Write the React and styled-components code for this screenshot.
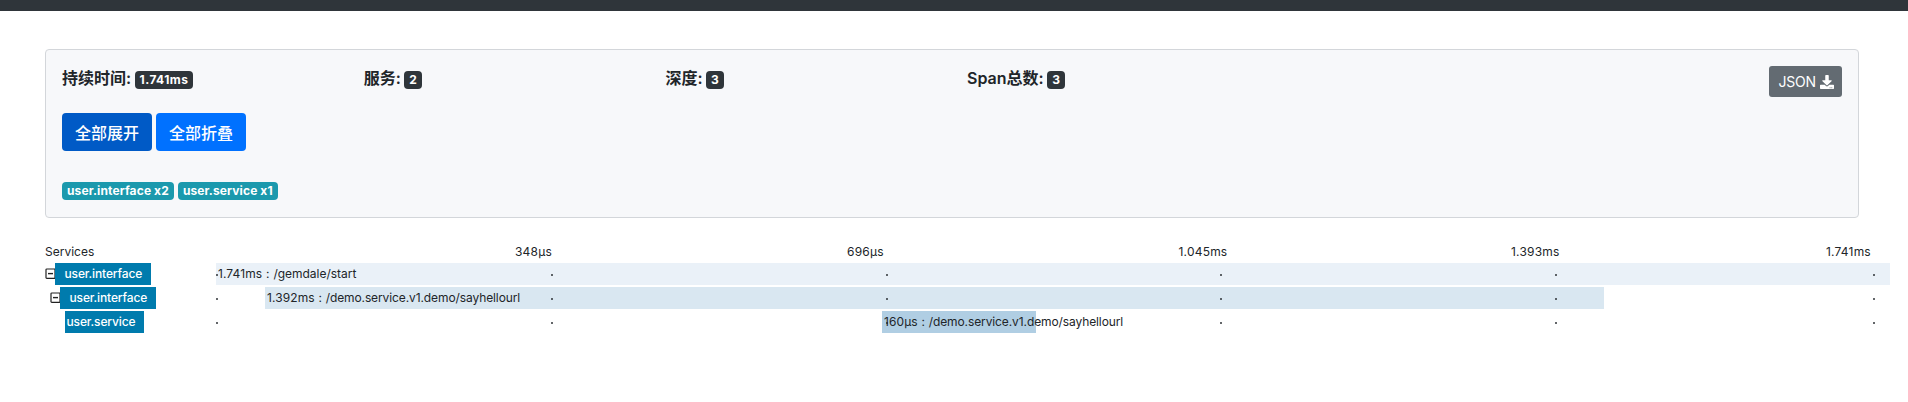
import React from "react";
import styled, { createGlobalStyle } from "styled-components";

const GlobalStyle = createGlobalStyle`
  *, *::before, *::after { box-sizing: border-box; }
  body {
    margin: 0;
    background: #fff;
    color: #212529;
    font-family: Inter, "Noto Sans CJK SC", sans-serif;
    font-size: 16px;
    line-height: 24px;
    overflow: hidden;
  }
`;

const TopBar = styled.header`
  height: 11px;
  background: #2f353a;
`;

const Page = styled.main`
  padding: 38px 0 0 45px;
`;

const Card = styled.section`
  display: flex;
  flex-direction: column;
  align-items: flex-start;
  width: 1814px;
  height: 169px;
  padding: 16px;
  border: 1px solid #d3d6da;
  border-radius: 4px;
  background: #f7f8fa;
`;

const SummaryRow = styled.div`
  display: flex;
  align-items: flex-start;
  width: 100%;
  height: 47px;
`;

const Stat = styled.div`
  display: flex;
  width: 301.7px;
  gap: 3.5px;
  font-size: 16px;
  font-weight: 600;
  white-space: nowrap;
`;

const Badge = styled.span`
  height: 18px;
  padding: 0 5px;
  border-radius: 4px;
  background: ${({ $tone }) => ($tone === "info" ? "#1b99ad" : "#2f353a")};
  color: #fff;
  font-size: 12px;
  font-weight: 700;
  letter-spacing: 0.12px;
  line-height: 18px;
  white-space: nowrap;
`;

const StatBadge = styled(Badge)`
  margin-top: 5px;
  letter-spacing: 0.45px;
`;

const JsonButton = styled.button`
  display: flex;
  align-items: center;
  gap: 4px;
  width: 73px;
  height: 31px;
  margin-left: auto;
  padding: 0 0 0 9.5px;
  border: 0;
  border-radius: 3px;
  background: #636b72;
  color: #fff;
  font: 14px/21px Inter, sans-serif;
  letter-spacing: -0.25px;
`;

const Actions = styled.div`
  display: flex;
  gap: 4px;
`;

const Button = styled.button`
  width: 90px;
  height: 38px;
  padding: 0;
  border: 0;
  border-radius: 4px;
  background: ${({ $active }) => ($active ? "#005ac6" : "#0071ff")};
  color: #fff;
  font: 500 16px/24px "Noto Sans CJK SC", sans-serif;
`;

const Tags = styled.div`
  display: flex;
  gap: 4px;
  margin-top: 31px;
`;

const Timeline = styled.section`
  margin-top: 23px;
  width: 1845px;
  font-size: 12px;
  line-height: 22px;
`;

const TimelineRow = styled.div`
  display: grid;
  grid-template-columns: 171px 1674px;
  height: 22px;
  margin-bottom: ${({ $head }) => ($head ? 0 : 2)}px;
  white-space: nowrap;
`;

const Scale = styled.div`
  display: grid;
  grid-template-columns: 332px 331.5px 332.5px 315px auto;
  padding-left: 299px;
  letter-spacing: 0.2px;
`;

const ServiceCell = styled.div`
  display: flex;
  align-items: center;
  padding-left: ${({ $depth }) => $depth * 5}px;
`;

const ServiceName = styled.span`
  width: ${({ $leaf }) => ($leaf ? 79 : 96)}px;
  height: 22px;
  margin-left: ${({ $leaf }) => ($leaf ? 10 : 0)}px;
  padding-left: ${({ $leaf }) => ($leaf ? 1.5 : 9.5)}px;
  background: #007bad;
  color: #fff;
  font-weight: 500;
  letter-spacing: -0.13px;
`;

const Toggle = styled.svg`
  flex: none;
  width: 10px;
  height: 12px;
`;

const Track = styled.div`
  display: grid;
  grid-template-columns: 1674px;
  grid-template-rows: 22px;
`;

const Bar = styled.div`
  grid-area: 1 / 1;
  width: ${({ $width }) => $width}px;
  margin-left: ${({ $start }) => $start}px;
  padding-left: 2px;
  background: ${({ $color }) => $color};
  letter-spacing: ${({ $long }) => ($long ? -0.1 : -0.02)}px;
  word-spacing: 0.5px;
`;

const Duration = styled.span`
  letter-spacing: 0.1px;
`;

const Ticks = styled.div`
  grid-area: 1 / 1;
  z-index: 1;
  display: grid;
  grid-template-columns: repeat(4, 334.8px) 318px 2px;
  padding-top: 11px;
`;

const Tick = styled.i`
  width: 2px;
  height: 2px;
  background: rgba(33, 37, 41, 0.7);
`;

const scale = ["348µs", "696µs", "1.045ms", "1.393ms", "1.741ms"];

const stats = [
  ["持续时间:", "1.741ms"],
  ["服务:", "2"],
  ["深度:", "3"],
  ["Span总数:", "3"],
];

const spans = [
  { service: "user.interface", duration: "1.741ms", path: "/gemdale/start", start: 0, width: 1674, color: "#eaf1f8" },
  { service: "user.interface", duration: "1.392ms", path: "/demo.service.v1.demo/sayhellourl", start: 49, width: 1339, color: "#d9e7f1" },
  { service: "user.service", duration: "160µs", path: "/demo.service.v1.demo/sayhellourl", start: 666, width: 154, color: "#b0cee3", leaf: true },
];

function DownloadIcon() {
  return (
    <svg width="14" height="14" viewBox="0 0 512 512" fill="currentColor">
      <path d="M216 0h80c13.300 0 24 10.700 24 24v168h87.700c17.800 0 26.700 21.500 14.100 34.100L269.700 378.300c-7.500 7.500-19.800 7.500-27.300 0L90.100 226.100c-12.600-12.600-3.700-34.100 14.100-34.100H192V24c0-13.300 10.700-24 24-24zm296 376v112c0 13.300-10.700 24-24 24H24c-13.300 0-24-10.700-24-24V376c0-13.300 10.700-24 24-24h146.700l49 49c20.100 20.100 52.500 20.100 72.600 0l49-49H488c13.300 0 24 10.700 24 24zm-124 88c0-11-9-20-20-20s-20 9-20 20 9 20 20 20 20-9 20-20zm64 0c0-11-9-20-20-20s-20 9-20 20 9 20 20 20 20-9 20-20z" />
    </svg>
  );
}

export default function App() {
  return (
    <>
      <GlobalStyle />
      <TopBar />
      <Page>
        <Card>
          <SummaryRow>
            {stats.map(([label, value]) => (
              <Stat key={label}>
                {label}
                <StatBadge>{value}</StatBadge>
              </Stat>
            ))}
            <JsonButton>
              JSON
              <DownloadIcon />
            </JsonButton>
          </SummaryRow>
          <Actions>
            <Button $active>全部展开</Button>
            <Button>全部折叠</Button>
          </Actions>
          <Tags>
            <Badge $tone="info">user.interface x2</Badge>
            <Badge $tone="info">user.service x1</Badge>
          </Tags>
        </Card>
        <Timeline>
          <TimelineRow $head>
            <span>Services</span>
            <Scale>
              {scale.map((mark) => (
                <span key={mark}>{mark}</span>
              ))}
            </Scale>
          </TimelineRow>
          {spans.map((span, depth) => (
            <TimelineRow key={depth}>
              <ServiceCell $depth={depth}>
                {!span.leaf && (
                  <Toggle viewBox="0 0 10 12" fill="none" stroke="#222">
                    <rect x="1" y="1" width="9" height="9.400" rx="0.8" strokeWidth="1.200" />
                    <path d="M3 5.600h5" strokeWidth="1.400" />
                  </Toggle>
                )}
                <ServiceName $leaf={span.leaf}>{span.service}</ServiceName>
              </ServiceCell>
              <Track>
                <Bar $start={span.start} $width={span.width} $color={span.color} $long={depth > 0}>
                  <Duration>{span.duration}</Duration> : {span.path}
                </Bar>
                <Ticks>
                  {[0, 1, 2, 3, 4, 5].map((n) => (
                    <Tick key={n} />
                  ))}
                </Ticks>
              </Track>
            </TimelineRow>
          ))}
        </Timeline>
      </Page>
    </>
  );
}
